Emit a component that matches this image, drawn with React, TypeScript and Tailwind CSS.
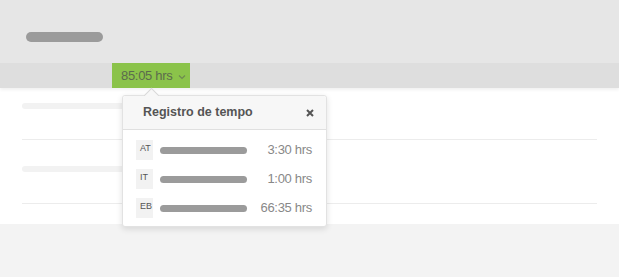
const rows = [
  { tag: "AT", time: "3:30 hrs" },
  { tag: "IT", time: "1:00 hrs" },
  { tag: "EB", time: "66:35 hrs" },
];

const App = () => {
  return (
    <div className="relative w-[619px] h-[277px] overflow-hidden bg-[#f3f3f3] font-['Liberation_Sans',Arial,sans-serif]">
      {/* header */}
      <div className="h-[63px] bg-[#e6e6e6] pt-[32px] pl-[26px]">
        <div className="w-[77px] h-[10px] rounded-full bg-[#9b9b9b]" />
      </div>

      {/* strip with badge */}
      <div className="relative z-10 h-[25px] bg-[#dedede] shadow-[0_2px_3px_rgba(0,0,0,0.06)] pl-[112px]">
        <div className="flex items-center h-full w-[78px] bg-[#8bc34a] pl-[9px] text-[13px] text-[#5b6b4d] tracking-[-0.3px]">
          85:05 hrs
          <svg width="8" height="6" viewBox="0 0 8 6" className="ml-[5px] mt-[2px]">
            <path d="M1 1.5 L4 4.5 L7 1.5" fill="none" stroke="#6e8a52" strokeWidth="1.2" />
          </svg>
        </div>
      </div>

      {/* content list */}
      <div className="h-[136px] bg-white px-[22px]">
        <div className="h-[52px] border-b border-[#ececec] pt-[15px]">
          <div className="w-[110px] h-[6px] rounded-full bg-[#f2f2f2]" />
        </div>
        <div className="h-[64px] border-b border-[#ececec] pt-[26px]">
          <div className="w-[110px] h-[6px] rounded-full bg-[#f2f2f2]" />
        </div>
      </div>

      {/* popover */}
      <div className="absolute left-[122px] top-[95px] z-20 w-[205px] h-[132px] bg-white border border-[#e2e2e2] rounded-[3px] shadow-[0_2px_6px_rgba(0,0,0,0.12)]">
        <div className="absolute -top-[6px] left-[23px] w-[11px] h-[11px] rotate-45 bg-[#f7f7f7] border-l border-t border-[#d8d8d8]" />
        <div className="relative flex items-center justify-between h-[34px] bg-[#f7f7f7] border-b border-[#e0e0e0] rounded-t-[3px] pl-[20px] pr-[12px]">
          <span className="text-[12.5px] font-bold text-[#555]">Registro de tempo</span>
          <svg width="8" height="8" viewBox="0 0 8 8">
            <path d="M1 1 L7 7 M7 1 L1 7" stroke="#555" strokeWidth="2" />
          </svg>
        </div>
        <div className="flex flex-col gap-[9px] pt-[10px] pl-[13px] pr-[14px]">
          {rows.map((r) => (
            <div key={r.tag} className="flex items-center h-[20px]">
              <div className="w-[17px] h-[20px] bg-[#f2f2f2] text-[9px] text-[#555] leading-none pl-[4px] pt-[4px]">
                {r.tag}
              </div>
              <div className="ml-[7px] w-[87px] h-[7px] rounded-full bg-[#9b9b9b]" />
              <div className="ml-auto text-[13px] text-[#888] tracking-[-0.3px]">{r.time}</div>
            </div>
          ))}
        </div>
      </div>
    </div>
  );
};

export default App;
